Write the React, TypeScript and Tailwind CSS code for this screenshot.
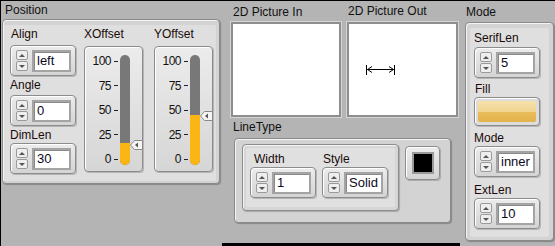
import React from 'react';

const Spin = () => (
  <div className="flex h-[21px] w-[12px] flex-col justify-between">
    <div className="flex h-[10px] items-center justify-center rounded-[2px] border border-[#9a9a9a] bg-[#eeeeee]">
      <div className="h-0 w-0 border-x-[3px] border-b-[3px] border-x-transparent border-b-[#555]" />
    </div>
    <div className="flex h-[10px] items-center justify-center rounded-[2px] border border-[#9a9a9a] bg-[#eeeeee]">
      <div className="h-0 w-0 border-x-[3px] border-t-[3px] border-x-transparent border-t-[#555]" />
    </div>
  </div>
);

const NumCtl = ({ value, h = 'h-[31px]' }: { value: string; h?: string }) => (
  <div
    className={`flex ${h} w-[66px] items-center rounded-[4px] border border-[#8c8c8c] bg-gradient-to-b from-[#ececec] to-[#d4d4d4] pl-[5px] shadow-[inset_1px_1px_0_#fff,1px_1px_0_rgba(0,0,0,0.18)]`}
  >
    <Spin />
    <div className="ml-[4px] flex h-[22px] w-[39px] items-center border-2 border-[#a4a4a4] bg-white pl-[3px] text-[13px] leading-none text-[#0a0a1e] shadow-[inset_1px_1px_0_#8a8a8a]">
      {value}
    </div>
  </div>
);

const Label = ({ children, cls = '' }: { children: React.ReactNode; cls?: string }) => (
  <div className={`h-[16px] text-[12px] leading-[16px] text-[#1a0a0a] ${cls}`}>{children}</div>
);

const Pointer = ({ top }: { top: number }) => (
  <svg
    className="absolute left-[45px]"
    style={{ top }}
    width="13"
    height="10"
    viewBox="0 0 13 10"
  >
    <path d="M0.5 5 L4.5 0.5 H12.5 V9.5 H4.5 Z" fill="#f4f4f4" stroke="#8a8a8a" />
    <path d="M5 5 L8 2.5 V7.5 Z" fill="#555" />
  </svg>
);

const Slide = ({ fill, pointer }: { fill: number; pointer: number }) => (
  <div className="relative flex h-[126px] w-[59px] rounded-[4px] border border-[#8c8c8c] bg-gradient-to-b from-[#ececec] to-[#d6d6d6] shadow-[inset_1px_1px_0_#fff,1px_1px_0_rgba(0,0,0,0.18)]">
    <div className="ml-[2px] mt-[7px] flex h-[112px] w-[31px] flex-col items-end justify-between text-[12px] leading-[14px] tracking-[-0.5px] text-[#111]">
      {['100', '75', '50', '25', '0'].map((t) => (
        <div key={t} className="flex items-center">
          <span>{t}</span>
          <span className="ml-[3px] h-px w-[4px] bg-[#222]" />
        </div>
      ))}
    </div>
    <div className="ml-[2px] mt-[8px] flex h-[110px] w-[10px] flex-col justify-end overflow-hidden rounded-full bg-[#787878]">
      <div className="w-full bg-[#fbb615]" style={{ height: fill }} />
    </div>
    <Pointer top={pointer} />
  </div>
);

const Frame = ({ children, cls }: { children: React.ReactNode; cls: string }) => (
  <div
    className={`rounded-[4px] border border-[#8a8a8a] bg-[#d3d3d3] shadow-[inset_1px_1px_0_#f4f4f4,1px_1px_1px_rgba(0,0,0,0.25)] ${cls}`}
  >
    {children}
  </div>
);

const Picture = ({ w, children }: { w: string; children?: React.ReactNode }) => (
  <div className={`${w} h-[95px] border-2 border-[#8e8e8e] bg-white outline outline-1 outline-[#d4d4d4]`}>{children}</div>
);

export default function App() {
  return (
    <div className="flex h-[246px] w-[555px] flex-col overflow-hidden border-l border-t border-black bg-[#b4b4b4] font-['Liberation_Sans',Arial,sans-serif]">
      <div className="flex h-[243px]">
        {/* Position */}
        <div className="ml-[1px] w-[218px]">
          <div className="h-[18px] pl-[3px] pt-[1px] text-[12px] leading-[16px] text-[#111]">Position</div>
          <Frame cls="h-[165px] w-[218px] pb-[2px] pl-[1px] pr-[3px] pt-[5px]">
            <div className="flex h-full rounded-[2px] bg-[#dfdfdf] pl-[6px] pt-[1px]">
              <div className="flex w-[67px] flex-col">
                <Label cls="pl-[1px]">Align</Label>
                <div className="mt-[3px]">
                  <NumCtl value="left" />
                </div>
                <Label cls="mt-[1px]">Angle</Label>
                <div className="mt-[2px]">
                  <NumCtl value="0" />
                </div>
                <Label cls="mt-[1px]">DimLen</Label>
                <div>
                  <NumCtl value="30" />
                </div>
              </div>
              <div className="ml-[7px] flex flex-col">
                <Label>XOffset</Label>
                <div className="mt-[4px]">
                  <Slide fill={22} pointer={93} />
                </div>
              </div>
              <div className="ml-[11px] flex flex-col">
                <Label>YOffset</Label>
                <div className="mt-[4px]">
                  <Slide fill={50} pointer={64} />
                </div>
              </div>
            </div>
          </Frame>
        </div>

        {/* Pictures + LineType */}
        <div className="ml-[11px] flex w-[227px] flex-col">
          <div className="flex gap-[6px]">
            <div className="flex flex-col">
              <div className="h-[21px] pl-[2px] pt-[3px] text-[12px] leading-[16px] text-[#111]">2D Picture In</div>
              <Picture w="w-[110px]" />
            </div>
            <div className="flex flex-col">
              <div className="h-[21px] pl-[1px] pt-[2px] text-[12px] leading-[16px] text-[#111]">2D Picture Out</div>
              <Picture w="w-[111px]">
                <svg width="107" height="91" viewBox="0 0 107 91">
                  <g stroke="#000" strokeWidth="1" fill="none" shapeRendering="crispEdges">
                    <line x1="17.5" y1="41" x2="17.5" y2="51" strokeWidth="1.5" />
                    <line x1="45.5" y1="41" x2="45.5" y2="51" strokeWidth="1.5" />
                    <line x1="18" y1="45.5" x2="45" y2="45.5" />
                  </g>
                  <g stroke="#000" strokeWidth="1" fill="none">
                    <path d="M23 42.5 L18.5 45.5 L23 48.5" />
                    <path d="M40 42.5 L44.5 45.5 L40 48.5" />
                  </g>
                </svg>
              </Picture>
            </div>
          </div>
          <div className="h-[21px] pl-[2px] pt-[2px] text-[12px] leading-[16px] text-[#111]">LineType</div>
          <Frame cls="ml-[3px] flex h-[85px] w-[217px] pl-[7px] pt-[5px]">
            <div className="h-[67px] w-[157px] rounded-[4px] border border-[#8c8c8c] bg-[#d6d6d6] p-[3px] shadow-[inset_1px_1px_0_#f4f4f4,1px_1px_1px_rgba(0,0,0,0.2)]">
              <div className="flex h-full gap-[6px] rounded-[2px] bg-[#e0e0e0] pl-[4px] pt-[3px]">
                <div className="flex flex-col">
                  <Label cls="pl-[4px]">Width</Label>
                  <NumCtl value="1" />
                </div>
                <div className="flex flex-col">
                  <Label cls="pl-[1px]">Style</Label>
                  <NumCtl value="Solid" />
                </div>
              </div>
            </div>
            <div className="ml-[6px] mt-[2px] flex h-[34px] w-[35px] items-center justify-center rounded-[4px] border border-[#8c8c8c] bg-gradient-to-b from-[#ececec] to-[#d4d4d4] shadow-[inset_1px_1px_0_#fff,1px_1px_0_rgba(0,0,0,0.18)]">
              <div className="h-[22px] w-[22px] border-2 border-[#9a9a9a] bg-black" />
            </div>
          </Frame>
        </div>

        {/* Mode */}
        <div className="ml-[7px] flex w-[89px] flex-col">
          <div className="h-[21px] pl-[1px] pt-[3px] text-[12px] leading-[16px] text-[#111]">Mode</div>
          <Frame cls="h-[219px] w-[89px] pb-[3px] pl-[4px] pr-[4px] pt-[5px]">
            <div className="flex h-full flex-col rounded-[2px] bg-[#dfdfdf] pl-[4px] pt-[2px]">
              <Label>SerifLen</Label>
              <div className="mt-[1px]">
                <NumCtl value="5" />
              </div>
              <Label cls="mt-[3px] pl-[1px]">Fill</Label>
              <div className="flex h-[29px] w-[66px] rounded-[4px] border border-[#8c8c8c] bg-[#dcdcdc] p-[3px] shadow-[inset_1px_1px_0_#fff,1px_1px_0_rgba(0,0,0,0.18)]">
                <div className="flex flex-1 flex-col overflow-hidden rounded-[2px]">
                  <div className="h-1/2 bg-gradient-to-b from-[#f6e2ab] to-[#f1d490]" />
                  <div className="h-1/2 bg-gradient-to-b from-[#e9bd5c] to-[#e3b24a]" />
                </div>
              </div>
              <Label cls="mt-[4px]">Mode</Label>
              <NumCtl value="inner" />
              <Label cls="mt-[5px]">ExtLen</Label>
              <NumCtl value="10" />
            </div>
          </Frame>
        </div>
      </div>
      <div className="ml-[221px] h-[3px] w-[238px] bg-black" />
    </div>
  );
}
